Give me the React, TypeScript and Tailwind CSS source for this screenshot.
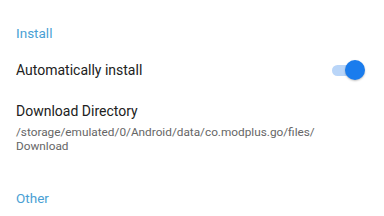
export default function App() {
  return (
    <main
      className="h-[216px] w-[384px] overflow-hidden bg-white pl-4 pr-[19px]"
      style={{ fontFamily: "Roboto, 'Noto Sans', sans-serif" }}
    >
      <h2 className="pt-[25px] text-[13.5px] leading-4 text-[#4a9fd4]">Install</h2>

      <div className="mt-[19px] flex h-5 items-center justify-between">
        <span className="text-[14px] leading-5 text-[#212121]">Automatically install</span>
        <div className="relative h-5 w-[33px]">
          <div className="absolute left-0 top-[5px] h-[11px] w-[24px] rounded-full bg-[#b9d5f8]" />
          <div className="absolute right-0 top-0 h-5 w-5 rounded-full bg-[#1a7ced] shadow-[0_1px_2px_rgba(0,0,0,0.25)]" />
        </div>
      </div>

      <div className="mt-[21px]">
        <p className="text-[14px] leading-5 text-[#212121]">Download Directory</p>
        <p className="mt-1 text-[11.8px] leading-[14px] text-[#666666]">
          /storage/emulated/0/Android/data/co.modplus.go/files/
          <br />
          Download
        </p>
      </div>

      <h2 className="mt-[37px] text-[13.5px] leading-4 text-[#4a9fd4]">Other</h2>
    </main>
  );
}
